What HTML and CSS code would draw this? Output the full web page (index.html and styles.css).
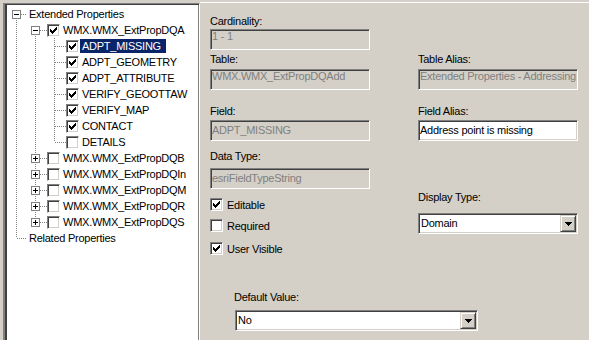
FILE: index.html
```html
<!DOCTYPE html>
<html lang="en">
<head>
<meta charset="UTF-8">
<title>Extended Properties</title>
<link rel="stylesheet" href="styles.css">
</head>
<body>
<svg class="defs" width="0" height="0">
    <symbol id="tick" viewBox="0 0 7 7">
        <path d="M6 0h1v1h-1z M5 1h2v1h-2z M0 2h1v1h-1z M4 2h3v1h-3z M0 3h2v1h-2z M3 3h3v1h-3z M0 4h5v1h-5z M1 5h3v1h-3z M2 6h1v1h-1z"/>
    </symbol>
    <symbol id="arrow" viewBox="0 0 7 4">
        <path d="M0 0h7v1h-7z M1 1h5v1h-5z M2 2h3v1h-3z M3 3h1v1h-1z"/>
    </symbol>
</svg>

<div class="topbar"></div>

<div class="main">
    <div class="tree">
        <div class="row">
            <span class="g box down"><i class="pm"></i></span>
            <span class="txt">Extended Properties</span>
        </div>
        <div class="row">
            <span class="g v"></span>
            <span class="g box down last"><i class="pm"></i></span>
            <span class="cb on"><svg><use href="#tick"/></svg></span>
            <span class="txt">WMX.WMX_ExtPropDQA</span>
        </div>
        <div class="row">
            <span class="g v"></span><span class="g v"></span><span class="g t last"></span>
            <span class="cb on"><svg><use href="#tick"/></svg></span>
            <span class="txt sel">ADPT_MISSING</span>
        </div>
        <div class="row">
            <span class="g v"></span><span class="g v"></span><span class="g t last"></span>
            <span class="cb on"><svg><use href="#tick"/></svg></span>
            <span class="txt">ADPT_GEOMETRY</span>
        </div>
        <div class="row">
            <span class="g v"></span><span class="g v"></span><span class="g t last"></span>
            <span class="cb on"><svg><use href="#tick"/></svg></span>
            <span class="txt">ADPT_ATTRIBUTE</span>
        </div>
        <div class="row">
            <span class="g v"></span><span class="g v"></span><span class="g t last"></span>
            <span class="cb on"><svg><use href="#tick"/></svg></span>
            <span class="txt">VERIFY_GEOOTTAW</span>
        </div>
        <div class="row">
            <span class="g v"></span><span class="g v"></span><span class="g t last"></span>
            <span class="cb on"><svg><use href="#tick"/></svg></span>
            <span class="txt">VERIFY_MAP</span>
        </div>
        <div class="row">
            <span class="g v"></span><span class="g v"></span><span class="g t last"></span>
            <span class="cb on"><svg><use href="#tick"/></svg></span>
            <span class="txt">CONTACT</span>
        </div>
        <div class="row">
            <span class="g v"></span><span class="g v"></span><span class="g l last"></span>
            <span class="cb"></span>
            <span class="txt">DETAILS</span>
        </div>
        <div class="row">
            <span class="g v"></span>
            <span class="g box up down last"><i class="pm plus"></i></span>
            <span class="cb"></span>
            <span class="txt">WMX.WMX_ExtPropDQB</span>
        </div>
        <div class="row">
            <span class="g v"></span>
            <span class="g box up down last"><i class="pm plus"></i></span>
            <span class="cb"></span>
            <span class="txt">WMX.WMX_ExtPropDQIn</span>
        </div>
        <div class="row">
            <span class="g v"></span>
            <span class="g box up down last"><i class="pm plus"></i></span>
            <span class="cb"></span>
            <span class="txt">WMX.WMX_ExtPropDQM</span>
        </div>
        <div class="row">
            <span class="g v"></span>
            <span class="g box up down last"><i class="pm plus"></i></span>
            <span class="cb"></span>
            <span class="txt">WMX.WMX_ExtPropDQR</span>
        </div>
        <div class="row">
            <span class="g v"></span>
            <span class="g box up last"><i class="pm plus"></i></span>
            <span class="cb"></span>
            <span class="txt">WMX.WMX_ExtPropDQS</span>
        </div>
        <div class="row">
            <span class="g l"></span>
            <span class="txt">Related Properties</span>
        </div>
    </div>

    <div class="panel">
        <div class="grid">
            <div class="lbl">Cardinality:</div><div></div>
            <div class="edit dis top m1">1 - 1</div><div></div>
            <div class="lbl m3">Table:</div><div class="lbl m3">Table Alias:</div>
            <div class="edit dis top m3">WMX.WMX_ExtPropDQAdd</div>
            <div class="edit dis top m3">Extended Properties - Addressing</div>
            <div class="lbl m15">Field:</div><div class="lbl m15">Field Alias:</div>
            <div class="edit dis m2">ADPT_MISSING</div>
            <div class="edit m2">Address point is missing</div>
        </div>

        <div class="lower">
            <div class="col">
                <div class="lbl m9">Data Type:</div>
                <div class="edit dis m5">esriFieldTypeString</div>
                <div class="chk m9"><span class="cb on"><svg><use href="#tick"/></svg></span><span>Editable</span></div>
                <div class="chk m8"><span class="cb"></span><span>Required</span></div>
                <div class="chk m10"><span class="cb on"><svg><use href="#tick"/></svg></span><span>User Visible</span></div>
            </div>
            <div class="col">
                <div class="lbl m50">Display Type:</div>
                <div class="combo m9">
                    <span class="val">Domain</span>
                    <span class="btn"><svg><use href="#arrow"/></svg></span>
                </div>
            </div>
        </div>

        <div class="dflt">
            <div class="lbl">Default Value:</div>
            <div class="combo wide">
                <span class="val">No</span>
                <span class="btn"><svg><use href="#arrow"/></svg></span>
            </div>
        </div>
    </div>
</div>
</body>
</html>
```

FILE: styles.css
```css
body {
    margin: 0;
    height: 340px;
    overflow: hidden;
    background: #d4d0c8;
    color: #000;
    font-family: "Liberation Sans", Arial, sans-serif;
    font-size: 11px;
    letter-spacing: -0.25px;
}

.defs {
    position: absolute;
}

/* strip left over from the window above */
.topbar {
    height: 3px;
    background: linear-gradient(#fff, #fff) 200px 2px / 100% 1px no-repeat, #d4d0c8;
}

.main {
    display: flex;
    height: 337px;
}

/* tree pane */
.tree {
    width: 192px;
    margin-left: 3px;
    padding: 2px 0 0 2px;
    background: #fff;
    border-top: 1px solid #808080;
    border-left: 2px solid #808080;
    border-right: 1px solid #fff;
    box-shadow: inset 2px 1px 0 #404040, inset -1px 0 0 #808080;
}

.row {
    display: flex;
    align-items: flex-start;
    height: 16px;
}

.g {
    position: relative;
    flex: none;
    width: 19px;
    height: 16px;
}

.g.last {
    width: 21px;
}

.g::before,
.g::after {
    content: "";
    position: absolute;
}

/* vertical guide */
.g::before {
    left: 9px;
    width: 1px;
    top: 0;
    bottom: 0;
    background: repeating-linear-gradient(to bottom, #808080 0 1px, transparent 1px 2px);
}

/* horizontal guide */
.g::after {
    left: 10px;
    right: 0;
    top: 8px;
    height: 1px;
    background: repeating-linear-gradient(to right, #808080 0 1px, transparent 1px 2px);
}

.g.v::after {
    display: none;
}

.g.l::before {
    bottom: 8px;
}

.g.box::before {
    display: none;
}

.g.box.up::before,
.g.box.down::before {
    display: block;
}

.g.box.down::before {
    top: 12px;
}

.g.box.up::before {
    top: 0;
    bottom: 12px;
}

.g.box.up.down::before {
    top: 0;
    bottom: 0;
}

.g.box::after {
    left: 14px;
}

.pm {
    position: absolute;
    z-index: 1;
    left: 5px;
    top: 4px;
    width: 9px;
    height: 9px;
    box-sizing: border-box;
    border: 1px solid #808080;
    background: #fff;
}

.pm::before,
.pm.plus::after {
    content: "";
    position: absolute;
    background: #000;
}

.pm::before {
    left: 1px;
    top: 3px;
    width: 5px;
    height: 1px;
}

.pm.plus::after {
    left: 3px;
    top: 1px;
    width: 1px;
    height: 5px;
}

.row .cb {
    margin-top: 2px;
}

.txt {
    margin: 1px 0 0 1px;
    padding: 0 2px;
    line-height: 14px;
    white-space: nowrap;
}

.txt.sel {
    padding-right: 5px;
    background: #0a246a;
    color: #fff;
}

/* checkbox */
.cb {
    flex: none;
    display: flex;
    align-items: center;
    justify-content: center;
    width: 13px;
    height: 13px;
    box-sizing: border-box;
    border: 1px solid;
    border-color: #808080 #fff #fff #808080;
    box-shadow: inset 1px 1px 0 #404040, inset -1px -1px 0 #d4d0c8;
    background: #fff;
}

.cb svg {
    display: block;
    width: 7px;
    height: 7px;
    shape-rendering: crispEdges;
}

/* property panel */
.panel {
    flex: 1;
    padding: 12px 0 0 10px;
}

.grid {
    display: grid;
    grid-template-columns: 160px 160px;
    column-gap: 48px;
}

.lower {
    display: flex;
    gap: 48px;
}

.col {
    width: 160px;
}

.lbl {
    line-height: 13px;
    white-space: nowrap;
}

.m1 { margin-top: 1px; }
.m2 { margin-top: 2px; }
.m3 { margin-top: 3px; }
.m5 { margin-top: 5px; }
.m8 { margin-top: 8px; }
.m9 { margin-top: 9px; }
.m10 { margin-top: 10px; }
.m15 { margin-top: 15px; }
.m50 { margin-top: 50px; }

.edit,
.combo {
    height: 21px;
    box-sizing: border-box;
    padding: 1px;
    border: 1px solid;
    border-color: #808080 #fff #fff #808080;
    box-shadow: inset 1px 1px 0 #404040, inset -1px -1px 0 #d4d0c8;
    background: #fff;
    line-height: 17px;
    white-space: nowrap;
    overflow: hidden;
}

.edit.dis {
    background: #d4d0c8;
    color: #808080;
}

.edit.top {
    line-height: 11px;
}

.combo {
    display: flex;
}

.combo .val {
    flex: 1;
    padding-left: 1px;
}

.combo .btn {
    flex: none;
    display: flex;
    align-items: center;
    justify-content: center;
    width: 16px;
    height: 17px;
    box-sizing: border-box;
    border: 1px solid;
    border-color: #d4d0c8 #404040 #404040 #d4d0c8;
    box-shadow: inset 1px 1px 0 #fff, inset -1px -1px 0 #808080;
    background: #d4d0c8;
}

.combo .btn svg {
    display: block;
    width: 7px;
    height: 4px;
    shape-rendering: crispEdges;
}

.chk {
    display: flex;
    align-items: center;
    height: 13px;
}

.chk .cb {
    margin-right: 4px;
}

.dflt {
    margin: 36px 0 0 25px;
}

.dflt .lbl {
    margin-left: -1px;
}

.combo.wide {
    width: 243px;
    margin-top: 6px;
}
```
